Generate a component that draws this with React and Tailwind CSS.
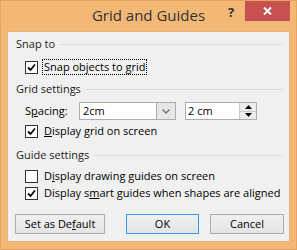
import React from 'react';

const font = { fontFamily: '"Open Sans", "Noto Sans", sans-serif' };

const Check = ({ checked }) => (
  <span className="w-[13px] h-[13px] border border-[#333333] bg-white flex items-center justify-center shrink-0">
    {checked && (
      <svg width="9" height="9" viewBox="0 0 9 9">
        <path d="M1 4.5 L3.5 7 L8 1.5" fill="none" stroke="#000" strokeWidth="1.8" />
      </svg>
    )}
  </span>
);

const Header = ({ children }) => (
  <div className="h-4 flex items-center pl-2 pr-[6px] gap-[5px]">
    <span className="text-[#1c1c1c] whitespace-nowrap">{children}</span>
    <span className="flex-1 h-px bg-[#dcdcdc]" />
  </div>
);

const CheckRow = ({ checked, children, className = '' }) => (
  <div className={`h-4 flex items-center pl-[17px] gap-[6px] ${className}`}>
    <Check checked={checked} />
    <span className="text-black leading-4 whitespace-nowrap">{children}</span>
  </div>
);

const Btn = ({ children, className = '' }) => (
  <button className={`h-5 border bg-gradient-to-b from-[#f0f0f0] to-[#e5e5e5] text-black flex items-center justify-center whitespace-nowrap ${className}`}>
    {children}
  </button>
);

const GridAndGuides = () => {
  return (
    <div className="w-[297px] h-[250px] bg-[#f4b876] border border-[#e3a460] flex flex-col text-[11px] leading-4" style={font}>
      <div className="h-[30px] flex items-start relative">
        <div className="flex-1 text-center text-[15px] text-[#333333] pt-[4px] leading-5">Grid and Guides</div>
        <span className="absolute left-[227px] top-[3px] text-[13px] font-bold text-[#333333]">?</span>
        <div className="absolute left-[244px] top-0 w-[45px] h-5 bg-[#c75050] flex items-center justify-center">
          <svg width="9" height="8" viewBox="0 0 9 8">
            <path d="M1 0.5 L8 7.5 M8 0.5 L1 7.5" stroke="#fff" strokeWidth="2" />
          </svg>
        </div>
      </div>
      <div className="ml-[6px] w-[283px] h-[211px] bg-[#f0f0f0] border border-[#e8b27a] flex flex-col pt-[4px]">
        <Header>Snap to</Header>
        <div className="h-4 mt-[7px] flex items-center pl-[17px] gap-[4px]">
          <Check checked />
          <span className="text-black border border-dotted border-black px-[1px] leading-[14px] whitespace-nowrap">
            Snap objects to <u>g</u>rid
          </span>
        </div>
        <div className="mt-[6px]">
          <Header>Grid settings</Header>
        </div>
        <div className="h-[18px] mt-[5px] flex items-center pl-[17px]">
          <span className="w-[54px] text-black">S<u>p</u>acing:</span>
          <div className="w-[97px] h-[18px] border border-[#abadb3] bg-white flex">
            <span className="flex-1 pl-[3px] text-black leading-4">2cm</span>
            <span className="w-[19px] h-full bg-[#e6e6e6] border-l border-[#acacac] flex items-center justify-center">
              <svg width="8" height="5" viewBox="0 0 8 5">
                <path d="M0.5 0.5 L4 4 L7.5 0.5" fill="none" stroke="#6d6d6d" strokeWidth="1.3" />
              </svg>
            </span>
          </div>
          <div className="ml-[9px] w-[72px] h-[18px] border border-[#abadb3] bg-white flex">
            <span className="flex-1 pl-[2px] text-black leading-4">2 cm</span>
            <span className="w-[17px] h-full bg-[#ececec] border-l border-[#c8c8c8] flex flex-col">
              <span className="flex-1 flex items-center justify-center border-b border-[#c8c8c8]">
                <svg width="7" height="4" viewBox="0 0 7 4"><path d="M0 4 L3.5 0 L7 4 Z" fill="#000" /></svg>
              </span>
              <span className="flex-1 flex items-center justify-center">
                <svg width="7" height="4" viewBox="0 0 7 4"><path d="M0 0 L3.5 4 L7 0 Z" fill="#000" /></svg>
              </span>
            </span>
          </div>
        </div>
        <CheckRow checked className="mt-[3px]">
          <u>D</u>isplay grid on screen
        </CheckRow>
        <div className="mt-[8px]">
          <Header>Guide settings</Header>
        </div>
        <CheckRow className="mt-[5px]">
          D<u>i</u>splay drawing guides on screen
        </CheckRow>
        <CheckRow checked className="mt-px">
          Display s<u>m</u>art guides when shapes are aligned
        </CheckRow>
        <div className="mt-[13px] flex items-center pl-[7px]">
          <Btn className="w-[90px] border-[#acacac]">
            Set as De<u>f</u>ault
          </Btn>
          <Btn className="ml-[21px] w-[73px] border-[#3399ff]">OK</Btn>
          <Btn className="ml-[11px] w-[74px] border-[#acacac]">Cancel</Btn>
        </div>
      </div>
    </div>
  );
};

export default GridAndGuides;
